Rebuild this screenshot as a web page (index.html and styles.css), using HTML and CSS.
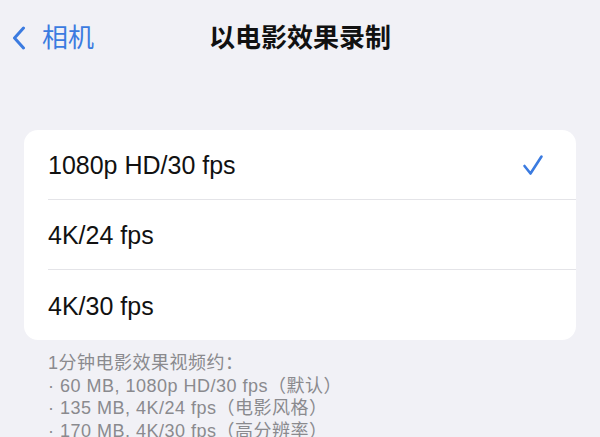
FILE: index.html
```html
<!DOCTYPE html>
<html lang="zh">
<head>
<meta charset="utf-8">
<link rel="stylesheet" href="styles.css">
</head>
<body>
<header class="nav">
  <div class="back">
    <svg class="chev" width="14" height="24" viewBox="0 0 14 24"><path d="M11.5 2 L2.5 12 L11.5 22" fill="none" stroke="#3b7be0" stroke-width="3" stroke-linecap="round" stroke-linejoin="round"/></svg>
    <span class="back-label">相机</span>
  </div>
  <h1 class="title">以电影效果录制</h1>
  <div></div>
</header>
<ul class="card">
  <li class="row"><span class="label">1080p HD/30 fps</span>
    <svg class="check" width="22" height="22" viewBox="0 0 22 22"><path d="M2.5 12 L8.5 19.5 L19.5 2.5" fill="none" stroke="#3b7be0" stroke-width="2.6" stroke-linecap="round" stroke-linejoin="round"/></svg>
  </li>
  <li class="row"><span class="label">4K/24 fps</span></li>
  <li class="row"><span class="label">4K/30 fps</span></li>
</ul>
<div class="note">
  <p>1分钟电影效果视频约：</p>
  <p>· 60 MB, 1080p HD/30 fps（默认）</p>
  <p>· 135 MB, 4K/24 fps（电影风格）</p>
  <p>· 170 MB, 4K/30 fps（高分辨率）</p>
</div>
</body>
</html>
```
FILE: styles.css
```css
html, body {
  margin: 0;
  padding: 0;
  background: #f1f1f6;
  font-family: "Liberation Sans", "Noto Sans CJK SC", sans-serif;
  overflow: hidden;
}
.nav {
  height: 76px;
  display: grid;
  grid-template-columns: 1fr auto 1fr;
  align-items: center;
}
.back {
  display: flex;
  align-items: center;
  padding-left: 12px;
  gap: 16px;
}
.chev { display: block; }
.back-label {
  font-size: 26px;
  color: #3b7be0;
  line-height: 30px;
}
.title {
  margin: 0;
  font-size: 26px;
  font-weight: 700;
  color: #111;
  line-height: 30px;
}
.card {
  list-style: none;
  margin: 54px 24px 0;
  padding: 0;
  background: #fff;
  border-radius: 14px;
  overflow: hidden;
}
.row {
  height: 70px;
  margin-left: 24px;
  padding-right: 32px;
  display: flex;
  align-items: center;
  justify-content: space-between;
  border-bottom: 1px solid #e4e4e8;
  box-sizing: border-box;
}
.row:last-child { border-bottom: none; }
.label {
  font-size: 25px;
  color: #111;
  padding-top: 2px;
}
.check { display: block; }
.note {
  padding: 12px 48px 0;
  color: #8a8a8e;
  font-size: 18px;
  letter-spacing: 0.5px;
  line-height: 22.5px;
}
.note p { margin: 0; white-space: nowrap; }
```
